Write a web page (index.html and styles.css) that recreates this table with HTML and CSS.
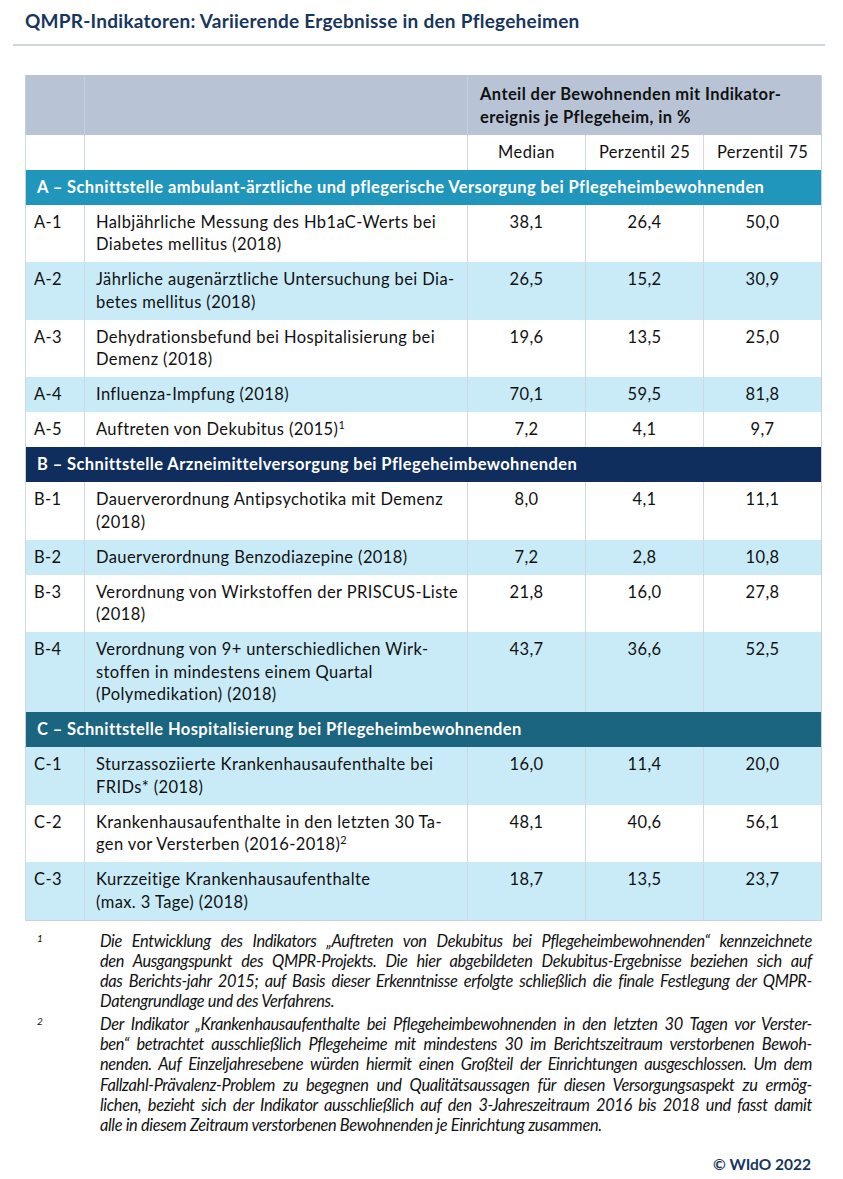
FILE: index.html
```html
<!DOCTYPE html>
<html lang="de">
<head>
<meta charset="utf-8">
<title>QMPR-Indikatoren</title>
<link rel="stylesheet" href="styles.css">
</head>
<body>
<div class="page">
  <header class="title-bar">
    <h1 class="title">QMPR-Indikatoren: Variierende Ergebnisse in den Pflegeheimen</h1>
  </header>

  <table class="data">
    <colgroup>
      <col class="c-id"><col class="c-name"><col class="c-num"><col class="c-num"><col class="c-num">
    </colgroup>
    <thead>
      <tr class="head1">
        <th></th>
        <th></th>
        <th colspan="3" class="head-group">Anteil der Bewohnenden mit Indikator-<br>ereignis je Pflegeheim, in %</th>
      </tr>
      <tr class="head2">
        <th></th>
        <th></th>
        <th class="num">Median</th>
        <th class="num">Perzentil 25</th>
        <th class="num">Perzentil 75</th>
      </tr>
    </thead>
    <tbody>
      <tr class="section sec-a"><td colspan="5">A – Schnittstelle ambulant-ärztliche und pflegerische Versorgung bei Pflegeheimbewohnenden</td></tr>
      <tr><td class="id">A-1</td><td class="name">Halbjährliche Messung des Hb1aC-Werts bei<br>Diabetes mellitus (2018)</td><td class="num">38,1</td><td class="num">26,4</td><td class="num">50,0</td></tr>
      <tr class="alt"><td class="id">A-2</td><td class="name">Jährliche augenärztliche Untersuchung bei Dia-<br>betes mellitus (2018)</td><td class="num">26,5</td><td class="num">15,2</td><td class="num">30,9</td></tr>
      <tr><td class="id">A-3</td><td class="name">Dehydrationsbefund bei Hospitalisierung bei<br>Demenz (2018)</td><td class="num">19,6</td><td class="num">13,5</td><td class="num">25,0</td></tr>
      <tr class="alt"><td class="id">A-4</td><td class="name">Influenza-Impfung (2018)</td><td class="num">70,1</td><td class="num">59,5</td><td class="num">81,8</td></tr>
      <tr><td class="id">A-5</td><td class="name">Auftreten von Dekubitus (2015)<sup>1</sup></td><td class="num">7,2</td><td class="num">4,1</td><td class="num">9,7</td></tr>

      <tr class="section sec-b"><td colspan="5">B – Schnittstelle Arzneimittelversorgung bei Pflegeheimbewohnenden</td></tr>
      <tr><td class="id">B-1</td><td class="name">Dauerverordnung Antipsychotika mit Demenz<br>(2018)</td><td class="num">8,0</td><td class="num">4,1</td><td class="num">11,1</td></tr>
      <tr class="alt"><td class="id">B-2</td><td class="name">Dauerverordnung Benzodiazepine (2018)</td><td class="num">7,2</td><td class="num">2,8</td><td class="num">10,8</td></tr>
      <tr><td class="id">B-3</td><td class="name">Verordnung von Wirkstoffen der PRISCUS-Liste<br>(2018)</td><td class="num">21,8</td><td class="num">16,0</td><td class="num">27,8</td></tr>
      <tr class="alt"><td class="id">B-4</td><td class="name">Verordnung von 9+ unterschiedlichen Wirk-<br>stoffen in mindestens einem Quartal<br>(Polymedikation) (2018)</td><td class="num">43,7</td><td class="num">36,6</td><td class="num">52,5</td></tr>

      <tr class="section sec-c"><td colspan="5">C – Schnittstelle Hospitalisierung bei Pflegeheimbewohnenden</td></tr>
      <tr class="alt"><td class="id">C-1</td><td class="name">Sturzassoziierte Krankenhausaufenthalte bei<br>FRIDs* (2018)</td><td class="num">16,0</td><td class="num">11,4</td><td class="num">20,0</td></tr>
      <tr><td class="id">C-2</td><td class="name">Krankenhausaufenthalte in den letzten 30 Ta-<br>gen vor Versterben (2016-2018)<sup>2</sup></td><td class="num">48,1</td><td class="num">40,6</td><td class="num">56,1</td></tr>
      <tr class="alt"><td class="id">C-3</td><td class="name">Kurzzeitige Krankenhausaufenthalte<br>(max. 3 Tage) (2018)</td><td class="num">18,7</td><td class="num">13,5</td><td class="num">23,7</td></tr>
    </tbody>
  </table>

  <section class="notes">
    <div class="note">
      <span class="note-mark">1</span>
      <p class="note-text">
        <span class="ln">Die Entwicklung des Indikators „Auftreten von Dekubitus bei Pflegeheimbewohnenden“ kennzeichnete</span>
        <span class="ln">den Ausgangspunkt des QMPR-Projekts. Die hier abgebildeten Dekubitus-Ergebnisse beziehen sich auf</span>
        <span class="ln">das Berichts-jahr 2015; auf Basis dieser Erkenntnisse erfolgte schließlich die finale Festlegung der QMPR-</span>
        <span class="ln last">Datengrundlage und des Verfahrens.</span>
      </p>
    </div>
    <div class="note">
      <span class="note-mark">2</span>
      <p class="note-text">
        <span class="ln">Der Indikator „Krankenhausaufenthalte bei Pflegeheimbewohnenden in den letzten 30 Tagen vor Verster-</span>
        <span class="ln">ben“ betrachtet ausschließlich Pflegeheime mit mindestens 30 im Berichtszeitraum verstorbenen Bewoh-</span>
        <span class="ln">nenden. Auf Einzeljahresebene würden hiermit einen Großteil der Einrichtungen ausgeschlossen. Um dem</span>
        <span class="ln">Fallzahl-Prävalenz-Problem zu begegnen und Qualitätsaussagen für diesen Versorgungsaspekt zu ermög-</span>
        <span class="ln">lichen, bezieht sich der Indikator ausschließlich auf den 3-Jahreszeitraum 2016 bis 2018 und fasst damit</span>
        <span class="ln last">alle in diesem Zeitraum verstorbenen Bewohnenden je Einrichtung zusammen.</span>
      </p>
    </div>
  </section>

  <footer class="copyright">© WIdO 2022</footer>
</div>
</body>
</html>
```

FILE: styles.css
```css
* { box-sizing: border-box; }

html, body {
  margin: 0;
  padding: 0;
  background: #ffffff;
}

body {
  font-family: "Lato", "Open Sans", "DejaVu Sans", sans-serif;
  color: #111111;
}

.page {
  width: 843px;
  padding: 0 18px 0 13px;
}

.title-bar {
  border-bottom: 2px solid #cdd5df;
  padding: 8px 0 11px 12px;
}

.title {
  margin: 0;
  font-size: 19px;
  line-height: 25px;
  font-weight: 700;
  color: #17365d;
  letter-spacing: 0.25px;
}

.data {
  margin: 29px 0 0 12px;
  width: 797px;
  border-collapse: collapse;
  table-layout: fixed;
  font-size: 16.5px;
  letter-spacing: 0.4px;
  line-height: 22.5px;
  border-left: 1px solid #c8d2dd;
  border-right: 1px solid #c8d2dd;
  border-bottom: 1px solid #c8d2dd;
}

.c-id { width: 59px; }
.c-name { width: 383px; }
.c-num { width: 118px; }

.data th,
.data td {
  padding: 6px 11px 6.5px;
  vertical-align: top;
  border-left: 1px solid #cfd8e2;
  font-weight: 400;
  white-space: nowrap;
}

.data td.id {
  padding-left: 8px;
  padding-right: 4px;
  text-align: left;
}

.data .num { text-align: center; }

.head1 th {
  background: #b8c4d5;
  height: 58px;
  padding-top: 8px;
  border-left-color: #c4cfdc;
}

.head1 .head-group {
  font-weight: 700;
  text-align: left;
  padding-left: 12px;
}

.head2 th {
  background: #ffffff;
}

.alt td { background: #c9ebf7; }

.section td {
  color: #ffffff;
  font-weight: 700;
  padding-left: 11px;
  border-left: none;
}

.sec-a td { background: #2196bc; }
.sec-b td { background: #0f2e5d; }
.sec-c td { background: #1b6580; }

sup {
  font-size: 11px;
  line-height: 0;
  vertical-align: 6px;
}

.notes {
  margin: 10px 0 0 12px;
  width: 787px;
}

.note {
  display: grid;
  grid-template-columns: 75px 1fr;
  margin-bottom: 2px;
}

.note-mark {
  font-style: italic;
  font-size: 10px;
  line-height: 14px;
  padding-left: 12px;
}

.note-text {
  margin: 0;
  font-style: italic;
  font-size: 16.4px;
  letter-spacing: -0.35px;
  line-height: 20.3px;
  color: #111111;
}

.ln {
  display: block;
  text-align: justify;
  text-align-last: justify;
  white-space: nowrap;
}

.ln.last {
  text-align-last: left;
}

.copyright {
  text-align: right;
  font-weight: 700;
  font-size: 15.5px;
  line-height: 20px;
  color: #17365d;
  margin-top: 19px;
  padding-right: 14px;
}
```
